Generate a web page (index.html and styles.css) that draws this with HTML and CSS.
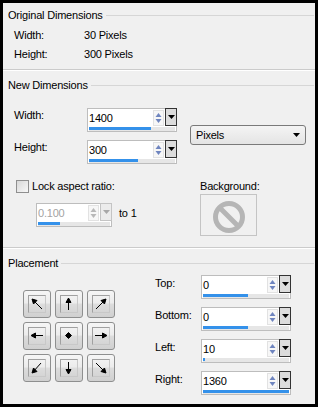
FILE: index.html
```html
<!DOCTYPE html>
<html lang="en">
<head>
    <meta charset="UTF-8">
    <meta name="viewport" content="width=device-width, initial-scale=1.0">
    <title>Canvas Size</title>
    <link rel="stylesheet" href="styles.css">
</head>
<body>
    <div class="dialog">
        <!-- Original dimensions -->
        <section class="group group-orig">
            <div class="legend">Original Dimensions</div>
            <div class="group-body">
                <div class="info-row first"><span class="info-label">Width:</span><span>30 Pixels</span></div>
                <div class="info-row"><span class="info-label">Height:</span><span>300 Pixels</span></div>
            </div>
        </section>

        <!-- New dimensions -->
        <section class="group group-new">
            <div class="legend">New Dimensions</div>
            <div class="group-body">
                <div class="size-row">
                    <div class="fields">
                        <div class="field">
                            <span class="field-label size-label">Width:</span>
                            <div class="spin">
                                <div class="spin-main">
                                    <span class="spin-value">1400</span>
                                    <span class="spin-arrows"><svg width="9" height="14" viewBox="0 0 9 14"><polygon points="4.5,2 1.5,6 7.5,6"/><polygon points="4.5,12 1.5,8 7.5,8"/></svg></span>
                                    <span class="spin-drop"><svg width="7" height="4" viewBox="0 0 7 4"><polygon points="0,0 7,0 3.5,4"/></svg></span>
                                </div>
                                <div class="spin-track"><div class="spin-fill" style="width:62px"></div></div>
                            </div>
                        </div>
                        <div class="field">
                            <span class="field-label size-label">Height:</span>
                            <div class="spin">
                                <div class="spin-main">
                                    <span class="spin-value">300</span>
                                    <span class="spin-arrows"><svg width="9" height="14" viewBox="0 0 9 14"><polygon points="4.5,2 1.5,6 7.5,6"/><polygon points="4.5,12 1.5,8 7.5,8"/></svg></span>
                                    <span class="spin-drop"><svg width="7" height="4" viewBox="0 0 7 4"><polygon points="0,0 7,0 3.5,4"/></svg></span>
                                </div>
                                <div class="spin-track"><div class="spin-fill" style="width:49px"></div></div>
                            </div>
                        </div>
                    </div>
                    <div class="unit-select">
                        <span>Pixels</span>
                        <svg width="7" height="4" viewBox="0 0 7 4"><polygon points="0,0 7,0 3.5,4"/></svg>
                    </div>
                </div>

                <div class="ratio-row">
                    <div class="ratio">
                        <label class="check-label"><span class="check-box"></span>Lock aspect ratio:</label>
                        <div class="ratio-field">
                            <div class="spin spin-small is-disabled">
                                <div class="spin-main">
                                    <span class="spin-value">0.100</span>
                                    <span class="spin-arrows"><svg width="9" height="14" viewBox="0 0 9 14"><polygon points="4.5,2 1.5,6 7.5,6"/><polygon points="4.5,12 1.5,8 7.5,8"/></svg></span>
                                    <span class="spin-drop"><svg width="7" height="4" viewBox="0 0 7 4"><polygon points="0,0 7,0 3.5,4"/></svg></span>
                                </div>
                                <div class="spin-track"><div class="spin-fill" style="width:22px"></div></div>
                            </div>
                            <span class="ratio-to">to 1</span>
                        </div>
                    </div>
                    <div class="background-pick">
                        <div>Background:</div>
                        <div class="bg-swatch">
                            <svg width="34" height="34" viewBox="0 0 34 34">
                                <circle cx="17" cy="17" r="13.5" fill="none" stroke="#b5b5b5" stroke-width="5"/>
                                <line x1="8" y1="8" x2="26" y2="26" stroke="#b5b5b5" stroke-width="5"/>
                            </svg>
                        </div>
                    </div>
                </div>
            </div>
        </section>

        <!-- Placement -->
        <section class="group group-place">
            <div class="legend">Placement</div>
            <div class="group-body">
                <div class="place-row">
                    <div class="anchors">
                        <div class="anchor"><span class="anchor-icon"><svg width="16" height="16" viewBox="0 0 16 16"><path d="M4 4L13 13"/><polygon points="3,3 8,4.5 4.5,8"/></svg></span></div>
                        <div class="anchor"><span class="anchor-icon"><svg width="16" height="16" viewBox="0 0 16 16"><path d="M7.5 4V14"/><polygon points="7.5,2 5,6.5 10,6.5"/></svg></span></div>
                        <div class="anchor"><span class="anchor-icon"><svg width="16" height="16" viewBox="0 0 16 16"><path d="M12 4L3 13"/><polygon points="13,3 8,4.5 11.5,8"/></svg></span></div>
                        <div class="anchor"><span class="anchor-icon"><svg width="16" height="16" viewBox="0 0 16 16"><path d="M4 7.5H14"/><polygon points="2,7.5 6.5,5 6.5,10"/></svg></span></div>
                        <div class="anchor"><span class="anchor-icon"><svg width="16" height="16" viewBox="0 0 16 16"><polygon points="7.5,4.5 10.5,7.5 7.5,10.5 4.5,7.5"/></svg></span></div>
                        <div class="anchor"><span class="anchor-icon"><svg width="16" height="16" viewBox="0 0 16 16"><path d="M2 7.5H12"/><polygon points="14,7.5 9.5,5 9.5,10"/></svg></span></div>
                        <div class="anchor"><span class="anchor-icon"><svg width="16" height="16" viewBox="0 0 16 16"><path d="M12 3L4 12"/><polygon points="3,13 4.5,8 8,11.5"/></svg></span></div>
                        <div class="anchor"><span class="anchor-icon"><svg width="16" height="16" viewBox="0 0 16 16"><path d="M7.5 2V12"/><polygon points="7.5,14 5,9.5 10,9.5"/></svg></span></div>
                        <div class="anchor"><span class="anchor-icon"><svg width="16" height="16" viewBox="0 0 16 16"><path d="M3 3L12 12"/><polygon points="13,13 8,11.5 11.5,8"/></svg></span></div>
                    </div>

                    <div class="margins">
                        <div class="field">
                            <span class="field-label margin-label">Top:</span>
                            <div class="spin">
                                <div class="spin-main">
                                    <span class="spin-value">0</span>
                                    <span class="spin-arrows"><svg width="9" height="14" viewBox="0 0 9 14"><polygon points="4.5,2 1.5,6 7.5,6"/><polygon points="4.5,12 1.5,8 7.5,8"/></svg></span>
                                    <span class="spin-drop"><svg width="7" height="4" viewBox="0 0 7 4"><polygon points="0,0 7,0 3.5,4"/></svg></span>
                                </div>
                                <div class="spin-track"><div class="spin-fill" style="width:45px"></div></div>
                            </div>
                        </div>
                        <div class="field">
                            <span class="field-label margin-label">Bottom:</span>
                            <div class="spin">
                                <div class="spin-main">
                                    <span class="spin-value">0</span>
                                    <span class="spin-arrows"><svg width="9" height="14" viewBox="0 0 9 14"><polygon points="4.5,2 1.5,6 7.5,6"/><polygon points="4.5,12 1.5,8 7.5,8"/></svg></span>
                                    <span class="spin-drop"><svg width="7" height="4" viewBox="0 0 7 4"><polygon points="0,0 7,0 3.5,4"/></svg></span>
                                </div>
                                <div class="spin-track"><div class="spin-fill" style="width:45px"></div></div>
                            </div>
                        </div>
                        <div class="field">
                            <span class="field-label margin-label">Left:</span>
                            <div class="spin">
                                <div class="spin-main">
                                    <span class="spin-value">10</span>
                                    <span class="spin-arrows"><svg width="9" height="14" viewBox="0 0 9 14"><polygon points="4.5,2 1.5,6 7.5,6"/><polygon points="4.5,12 1.5,8 7.5,8"/></svg></span>
                                    <span class="spin-drop"><svg width="7" height="4" viewBox="0 0 7 4"><polygon points="0,0 7,0 3.5,4"/></svg></span>
                                </div>
                                <div class="spin-track"><div class="spin-fill" style="width:2px"></div></div>
                            </div>
                        </div>
                        <div class="field">
                            <span class="field-label margin-label">Right:</span>
                            <div class="spin">
                                <div class="spin-main">
                                    <span class="spin-value">1360</span>
                                    <span class="spin-arrows"><svg width="9" height="14" viewBox="0 0 9 14"><polygon points="4.5,2 1.5,6 7.5,6"/><polygon points="4.5,12 1.5,8 7.5,8"/></svg></span>
                                    <span class="spin-drop"><svg width="7" height="4" viewBox="0 0 7 4"><polygon points="0,0 7,0 3.5,4"/></svg></span>
                                </div>
                                <div class="spin-track"><div class="spin-fill" style="width:86px"></div></div>
                            </div>
                        </div>
                    </div>
                </div>
            </div>
        </section>
    </div>
</body>
</html>
```

FILE: styles.css
```css
/* Page */
body {
    margin: 0;
    background: #000;
    font-family: "Liberation Sans", Arial, sans-serif;
    font-size: 11px;
    letter-spacing: -0.2px;
    color: #000;
}

/* Dialog frame */
.dialog {
    width: 318px;
    height: 407px;
    box-sizing: border-box;
    border: 3px solid #000;
    background: #f0f0f0;
    display: flex;
    flex-direction: column;
}

/* Group boxes */
.group {
    box-sizing: border-box;
    padding: 0 1px 0 5px;
    border-bottom: 1px solid #cbcbcb;
}

.group + .group {
    border-top: 1px solid #fff; /* etched separator */
}

.group-orig {
    height: 67px;
    padding-top: 5px;
}

.group-new {
    height: 178px;
    padding-top: 7px;
}

.group-place {
    flex: 1;
    padding-top: 7px;
    border-bottom: 0;
}

.legend {
    display: flex;
    align-items: center;
    gap: 3px;
    line-height: 14px;
}

.legend::after {
    content: "";
    flex: 1;
    border-top: 1px solid #d6d6d6;
}

.group-body {
    padding-left: 6px;
}

/* Original dimensions rows */
.info-row {
    display: flex;
    line-height: 19px;
}

.info-row.first {
    margin-top: 4px;
}

.info-label {
    width: 70px;
}

/* Label + spin rows */
.size-row {
    display: flex;
    align-items: flex-start;
    margin-top: 16px;
}

.fields,
.margins {
    display: flex;
    flex-direction: column;
    gap: 8px;
}

.field {
    display: flex;
    align-items: flex-start;
}

.field-label {
    line-height: 14px;
}

.size-label {
    width: 73px;
}

.margin-label {
    width: 46px;
    padding-top: 1px;
}

/* Spin box with slider bar */
.spin {
    width: 90px;
    height: 24px;
    box-sizing: border-box;
    border: 1px solid #bdbdbd;
    background: #fff;
    display: flex;
    flex-direction: column;
}

.spin-small {
    width: 76px;
}

.spin-main {
    display: flex;
    height: 18px;
}

.spin-value {
    flex: 1;
    line-height: 18px;
    padding-left: 1px;
}

.spin-arrows {
    width: 9px;
    height: 14px;
    margin: 1px 1px 0 0;
    border: 1px solid #e2e2e2;
    background: #f7f7f7;
    fill: #6f85bf;
}

.spin-arrows svg {
    display: block;
}

.spin-drop {
    width: 10px;
    height: 16px;
    margin: -1px -1px 0 0;
    border: 1px solid #333;
    background: #dcdcdc;
    display: flex;
    align-items: center;
    justify-content: center;
}

.spin-track {
    height: 4px;
    margin: 0 1px;
    background: #e6e6e6;
}

.spin-fill {
    height: 3px;
    background: #3491ea;
}

/* Disabled spin */
.is-disabled .spin-value {
    color: #a3a3a3;
}

.is-disabled .spin-arrows {
    fill: #b8b8b8;
}

.is-disabled .spin-drop {
    border-color: #c4c4c4;
    background: #ececec;
    fill: #a8a8a8;
}

/* Unit dropdown */
.unit-select {
    width: 116px;
    height: 20px;
    box-sizing: border-box;
    margin: 17px 0 0 13px;
    padding: 0 5px 0 5px;
    border: 1px solid #7a7a7a;
    border-radius: 3px;
    background: linear-gradient(#f4f4f4, #e4e4e4);
    display: flex;
    align-items: center;
    justify-content: space-between;
}

/* Lock aspect ratio */
.ratio-row {
    display: flex;
    margin-top: 15px;
}

.ratio {
    width: 186px;
}

.check-label {
    display: flex;
    align-items: center;
    gap: 3px;
    line-height: 14px;
    padding-left: 2px;
}

.check-box {
    width: 13px;
    height: 13px;
    box-sizing: border-box;
    border: 1px solid #8f8f8f;
    background: linear-gradient(135deg, #d8d8d8, #f8f8f8);
}

.ratio-field {
    display: flex;
    align-items: flex-start;
    gap: 7px;
    margin: 10px 0 0 22px;
}

.ratio-to {
    padding-top: 3px;
    line-height: 14px;
}

/* Background swatch */
.background-pick {
    line-height: 14px;
}

.bg-swatch {
    width: 57px;
    height: 42px;
    box-sizing: border-box;
    margin-top: 1px;
    padding-top: 3px;
    border: 1px solid #c4c4c4;
    display: flex;
    align-items: center;
    justify-content: center;
}

/* Placement */
.place-row {
    display: flex;
    align-items: flex-start;
    margin-top: 5px;
}

.anchors {
    display: grid;
    grid-template-columns: repeat(3, 28px);
    gap: 4px;
    margin: 15px 0 0 9px;
}

.margins {
    margin-left: 40px;
}

.anchor {
    width: 28px;
    height: 28px;
    box-sizing: border-box;
    border: 1px solid #8e8f8f;
    border-radius: 3px;
    background: linear-gradient(#f6f6f6, #ececec 45%, #dcdcdc 52%, #d0d0d0);
    display: flex;
    align-items: center;
    justify-content: center;
}

.anchor-icon {
    width: 18px;
    height: 18px;
    box-sizing: border-box;
    border: 1px solid #a0a0a0;
    border-right-color: #c8c8c8;
    border-bottom-color: #c8c8c8;
}

.anchor-icon svg {
    display: block;
    stroke: #000;
    fill: #000;
    stroke-width: 1;
}
```
